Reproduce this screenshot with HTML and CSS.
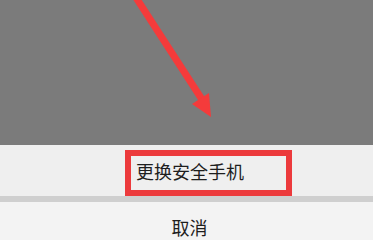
FILE: index.html
```html
<!DOCTYPE html>
<html lang="zh">
<head>
<meta charset="utf-8">
<link rel="stylesheet" href="styles.css">
</head>
<body>
<div class="screen">
  <div class="overlay">
    <svg class="arrow" width="373" height="145" viewBox="0 0 373 145">
      <line x1="135" y1="-4" x2="203" y2="101" stroke="#f43b3b" stroke-width="7" stroke-linecap="round"/>
      <polygon points="211,117 192,104 209,93" fill="#f43b3b"/>
    </svg>
  </div>
  <div class="sheet">
    <div class="action">更换安全手机</div>
    <div class="divider"></div>
    <div class="action cancel">取消</div>
  </div>
  <div class="mark"></div>
</div>
</body>
</html>
```
FILE: styles.css
```css
html, body {
  margin: 0;
  padding: 0;
  background: #f2f2f2;
}
.screen {
  position: relative;
  width: 373px;
  height: 240px;
  overflow: hidden;
  display: flex;
  flex-direction: column;
  font-family: "Noto Sans CJK SC", "Noto Sans", sans-serif;
}
.overlay {
  height: 145px;
  flex: none;
  background: #7b7b7b;
}
.arrow {
  display: block;
  filter: blur(0.6px);
}
.sheet {
  display: flex;
  flex-direction: column;
  flex: 1;
}
.action {
  height: 51px;
  display: flex;
  align-items: center;
  justify-content: center;
  padding-left: 7px;
  font-size: 18px;
  color: #1e1e1e;
  background: #efefef;
}
.divider {
  height: 6px;
  background: #cfcfcf;
}
.cancel {
  height: 52px;
  padding-left: 6px;
  background: #f3f3f3;
  align-items: flex-start;
  padding-top: 12px;
  box-sizing: border-box;
}
.mark {
  position: absolute;
  left: 125px;
  top: 150px;
  width: 167px;
  height: 46px;
  box-sizing: border-box;
  border: 6px solid #ec3a3c;
}
```
